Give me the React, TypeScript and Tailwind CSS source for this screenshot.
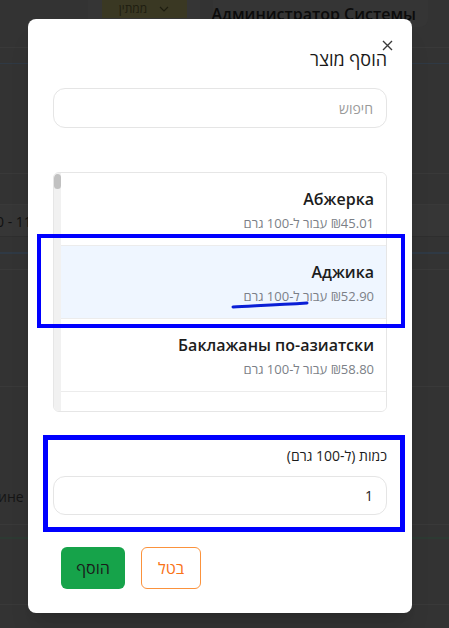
import React, { useState } from 'react';

type Product = { id: number; name: string; price: string };

const products: Product[] = [
  { id: 1, name: 'Абжерка', price: '45.01' },
  { id: 2, name: 'Аджика', price: '52.90' },
  { id: 3, name: 'Баклажаны по-азиатски', price: '58.80' },
  { id: 4, name: 'Бефстроганов из говядины (Домашний)', price: '64.50' },
];

const font = { fontFamily: '"Open Sans", "Noto Sans", "DejaVu Sans", sans-serif' };

const BackgroundPage = () => (
  <div className="h-[628px] w-full overflow-hidden bg-[#333333]">
    {/* header strip */}
    <div className="flex h-[48px] items-start border-b border-[#393939]">
      <div className="w-[88px]" />
      <div className="flex h-[40px] w-[112px] items-start justify-center rounded-b-md bg-[#353535]">
        <div className="flex h-[18px] w-[85px] items-center justify-center gap-3 bg-[#3a3823] text-[12px] text-[#1e1d10]">
          <span>ממתין</span>
          <svg width="10" height="6" viewBox="0 0 10 6" fill="none" stroke="#1e1d10" strokeWidth="1.2">
            <path d="M1 1l4 4 4-4" />
          </svg>
        </div>
      </div>
      <div className="w-[13px]" />
      <div className="flex h-[27px] w-[215px] items-center justify-end rounded-b-lg bg-[#353535] pr-[12px] text-[16px] font-semibold whitespace-nowrap text-[#0b0b0b]">
        Администратор Системы
      </div>
    </div>
    <div className="h-[16px] border-b border-[#2f3944]" />
    <div className="h-[110px] border-b border-[#393939]" />
    <div className="h-[31px] border-b border-[#393939]" />
    <div className="flex h-[32px] items-center border-b border-[#2e2e2e] bg-[#363636] text-[14px] text-[#111]">
      <span className="-ml-[4px] pt-[1px]">0 - 11</span>
    </div>
    <div className="h-[17px] border-b-2 border-[#2f3944]" />
    <div className="h-[16px] border-b border-[#393939]" />
    <div className="h-[117px] border-b border-[#393939]" />
    <div className="flex h-[138px] items-end pb-[17px] text-[14px] text-[#151515] border-b border-[#393939]">
      <span className="-ml-[2px]">ине</span>
    </div>
    <div className="h-[14px] border-b-2 border-[#2d3a33]" />
    <div className="h-[66px] border-b border-[#393939]" />
  </div>
);

const App: React.FC = () => {
  const [selected, setSelected] = useState(2);
  const [qty, setQty] = useState('1');
  const [search, setSearch] = useState('');

  return (
    <div className="relative h-[628px] w-full overflow-hidden" style={font}>
      <BackgroundPage />

      {/* modal */}
      <div
        dir="rtl"
        className="absolute left-[28px] top-[19px] w-[384px] rounded-lg bg-white px-[25px] pt-[26px] pb-[24px] shadow-xl"
      >
        <button className="absolute right-[19px] top-[20px] flex h-[12px] w-[12px] items-center justify-center">
          <svg width="11" height="11" viewBox="0 0 11 11" fill="none" stroke="#3a3a3a" strokeWidth="1.4">
            <path d="M1 1l9 9M10 1l-9 9" />
          </svg>
        </button>

        <h2 className="text-[18px] font-medium leading-[28px] text-[#1a1a1a]">הוסף מוצר</h2>

        <input
          value={search}
          onChange={(e) => setSearch(e.target.value)}
          placeholder="חיפוש"
          className="mt-[15px] h-[40px] w-full rounded-xl border border-[#e5e5e5] px-[13px] text-[14px] text-[#222] placeholder:text-[#9a9a9a] outline-none"
        />

        <div className="mt-[44px] flex h-[240px] overflow-hidden rounded-md border border-[#e6e6e6]">
          <div className="flex-1 overflow-hidden">
            {products.map((p) => (
              <button
                key={p.id}
                onClick={() => setSelected(p.id)}
                className={`block w-full border-b border-[#ececec] px-[12px] pt-[14px] pb-[14px] text-right ${
                  selected === p.id ? 'bg-[#eff6ff]' : 'bg-white'
                }`}
              >
                <div className="whitespace-nowrap text-[16px] font-semibold leading-6 text-[#1c1c1c]">{p.name}</div>
                <div className="mt-1 whitespace-nowrap text-[13px] leading-4 text-[#7b7f87]">
                  ₪{p.price} עבור ל-100 גרם
                </div>
              </button>
            ))}
          </div>
          <div className="w-[7px] bg-[#f1f1f1]">
            <div className="mt-[1px] h-[15px] rounded-sm bg-[#c1c1c1]" />
          </div>
        </div>

        <label className="mt-[34px] block text-[14px] leading-5 text-[#1c1c1c]">כמות (ל-100 גרם)</label>
        <input
          value={qty}
          onChange={(e) => setQty(e.target.value)}
          className="mt-[10px] h-[39px] w-full rounded-xl border border-[#e5e5e5] px-[13px] text-[14px] text-[#222] outline-none"
        />

        <div className="mt-[32px] flex justify-end gap-4 pl-[8px]">
          <button className="h-[42px] w-[60px] rounded-md border border-[#fb923c] bg-white text-[16px] text-[#f97316]">
            בטל
          </button>
          <button className="h-[42px] w-[64px] rounded-md bg-[#16a34a] text-[16px] text-[#1a1a1a]">הוסף</button>
        </div>
      </div>

      {/* hand-drawn annotations over the screenshot */}
      <div className="pointer-events-none absolute left-[37px] top-[234px] h-[94px] w-[368px] border-[4px] border-[#0000ff]" />
      <div className="pointer-events-none absolute left-[43px] top-[435px] h-[97px] w-[362px] border-[5px] border-[#0000ff]" />
      <svg className="pointer-events-none absolute left-[230px] top-[300px]" width="80" height="10" viewBox="0 0 80 10">
        <path d="M3 7 C 20 6, 45 5, 77 3" stroke="#0a1fd6" strokeWidth="3" strokeLinecap="round" fill="none" />
      </svg>
    </div>
  );
};

export default App;
